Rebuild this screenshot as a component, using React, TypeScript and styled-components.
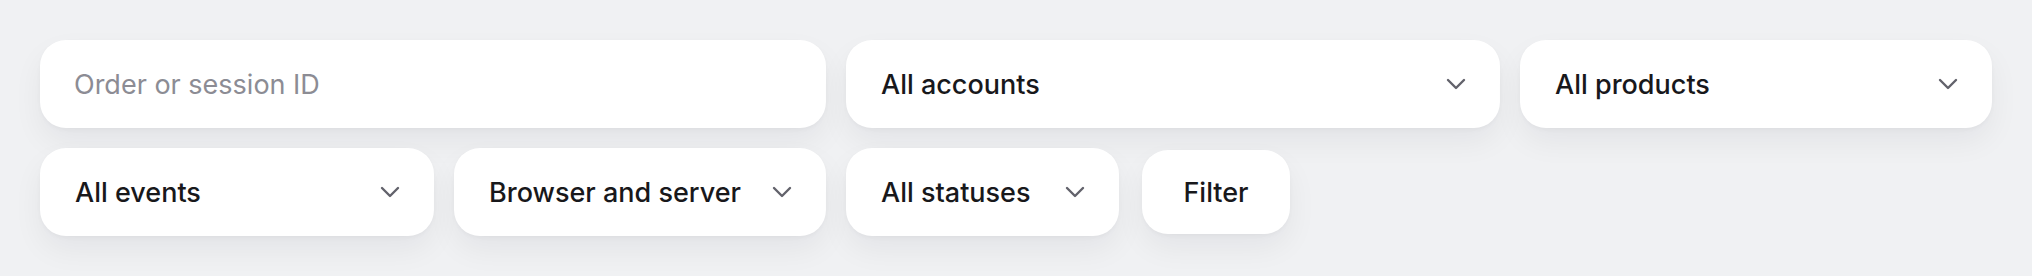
import React from "react";
import styled, { createGlobalStyle } from "styled-components";

const Global = createGlobalStyle`
  html, body { margin: 0; padding: 0; background: #f0f1f3; }
  body { font-family: Inter, "Noto Sans", sans-serif; -webkit-font-smoothing: antialiased; }
  * { box-sizing: border-box; }
`;

const Panel = styled.div`
  display: flex;
  flex-direction: column;
  gap: 20px;
  padding: 40px;
  width: 2032px;
  height: 276px;
  background: #f0f1f3;
`;

const Row = styled.div`
  display: flex;
  gap: 20px;
  align-items: center;
`;

const shadow = `0 14px 30px rgba(20, 24, 40, 0.055), 0 2px 4px rgba(20, 24, 40, 0.03)`;

const SearchBox = styled.div<{ $w: number }>`
  width: ${(p) => p.$w}px;
  height: 88px;
  background: #ffffff;
  border-radius: 26px;
  box-shadow: ${shadow};
  display: flex;
  align-items: center;
  padding: 0 34px;
`;

const SearchInput = styled.input`
  border: none;
  outline: none;
  background: transparent;
  width: 100%;
  font-family: Inter, "Noto Sans", sans-serif;
  font-size: 27px;
  color: #18181b;
  padding: 0;
  &::placeholder { color: #8c8c94; }
`;

const Select = styled.div<{ $w: number }>`
  width: ${(p) => p.$w}px;
  height: 88px;
  background: #ffffff;
  border-radius: 26px;
  box-shadow: ${shadow};
  display: flex;
  align-items: center;
  justify-content: space-between;
  padding: 0 34px 0 35px;
`;

const Label = styled.span`
  font-size: 27px;
  font-weight: 500;
  color: #18181b;
  white-space: nowrap;
`;

const FilterButton = styled.button`
  width: 148px;
  height: 84px;
  background: #ffffff;
  border: none;
  border-radius: 26px;
  box-shadow: ${shadow};
  font-family: Inter, "Noto Sans", sans-serif;
  font-size: 27px;
  font-weight: 500;
  color: #18181b;
  padding: 0;
  margin-left: 3px;
`;

const Chevron = () => (
  <svg width="20" height="12" viewBox="0 0 20 12" fill="none">
    <path d="M2 2 L10 10 L18 2" stroke="#62626b" strokeWidth="2.4" strokeLinecap="round" strokeLinejoin="round" />
  </svg>
);

const Dropdown = ({ label, w }: { label: string; w: number }) => (
  <Select $w={w}>
    <Label>{label}</Label>
    <Chevron />
  </Select>
);

export default function App() {
  return (
    <>
      <Global />
      <Panel>
        <Row>
          <SearchBox $w={786}>
            <SearchInput placeholder="Order or session ID" />
          </SearchBox>
          <Dropdown label="All accounts" w={654} />
          <Dropdown label="All products" w={472} />
        </Row>
        <Row>
          <Dropdown label="All events" w={394} />
          <Dropdown label="Browser and server" w={372} />
          <Dropdown label="All statuses" w={273} />
          <FilterButton>Filter</FilterButton>
        </Row>
      </Panel>
    </>
  );
}
